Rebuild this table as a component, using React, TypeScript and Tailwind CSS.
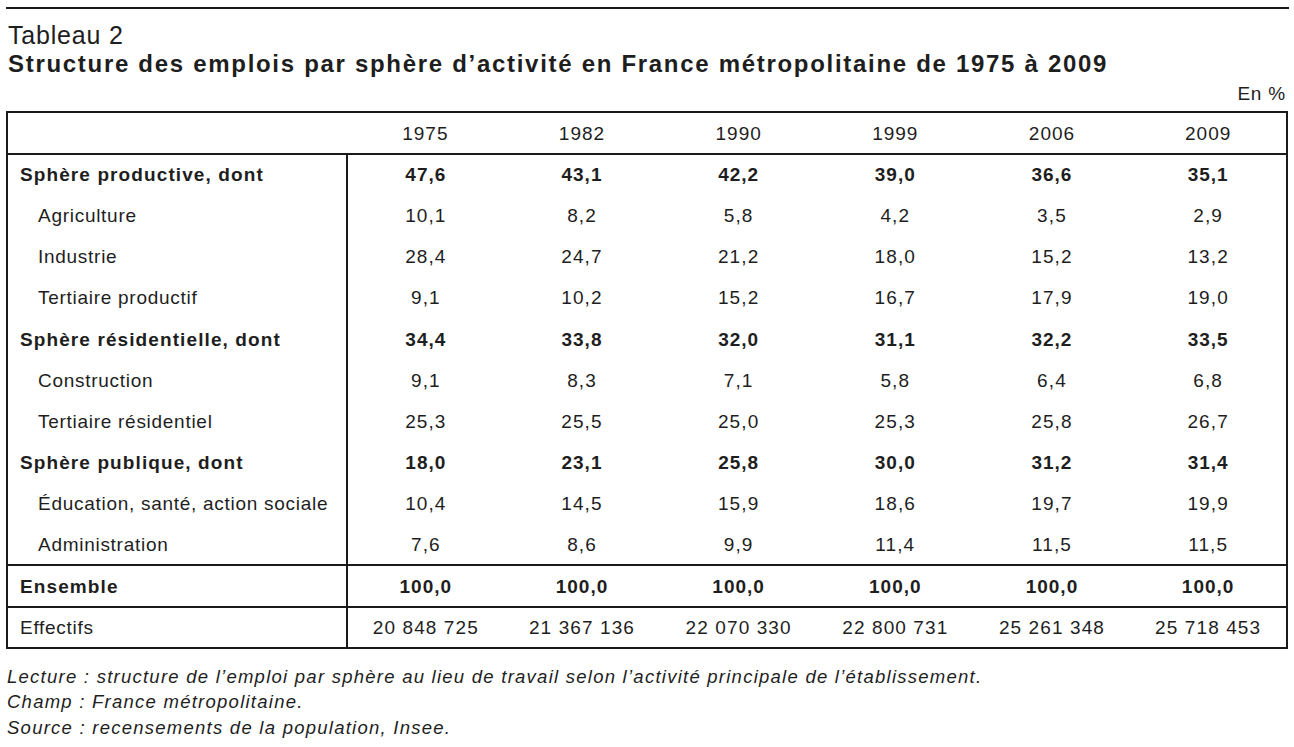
const years = ['1975', '1982', '1990', '1999', '2006', '2009'];

type Row = { label: string; values: string[]; kind: 'bold' | 'sub' | 'total' | 'plain' };

const rows: Row[] = [
  { label: 'Sphère productive, dont', values: ['47,6', '43,1', '42,2', '39,0', '36,6', '35,1'], kind: 'bold' },
  { label: 'Agriculture', values: ['10,1', '8,2', '5,8', '4,2', '3,5', '2,9'], kind: 'sub' },
  { label: 'Industrie', values: ['28,4', '24,7', '21,2', '18,0', '15,2', '13,2'], kind: 'sub' },
  { label: 'Tertiaire productif', values: ['9,1', '10,2', '15,2', '16,7', '17,9', '19,0'], kind: 'sub' },
  { label: 'Sphère résidentielle, dont', values: ['34,4', '33,8', '32,0', '31,1', '32,2', '33,5'], kind: 'bold' },
  { label: 'Construction', values: ['9,1', '8,3', '7,1', '5,8', '6,4', '6,8'], kind: 'sub' },
  { label: 'Tertiaire résidentiel', values: ['25,3', '25,5', '25,0', '25,3', '25,8', '26,7'], kind: 'sub' },
  { label: 'Sphère publique, dont', values: ['18,0', '23,1', '25,8', '30,0', '31,2', '31,4'], kind: 'bold' },
  { label: 'Éducation, santé, action sociale', values: ['10,4', '14,5', '15,9', '18,6', '19,7', '19,9'], kind: 'sub' },
  { label: 'Administration', values: ['7,6', '8,6', '9,9', '11,4', '11,5', '11,5'], kind: 'sub' },
  { label: 'Ensemble', values: ['100,0', '100,0', '100,0', '100,0', '100,0', '100,0'], kind: 'total' },
  { label: 'Effectifs', values: ['20 848 725', '21 367 136', '22 070 330', '22 800 731', '25 261 348', '25 718 453'], kind: 'plain' },
];

export default function App() {
  return (
    <div
      className="w-[1294px] h-[747px] bg-white text-[#1e1e1e] px-[6px] pt-[7px]"
      style={{ fontFamily: '"Liberation Sans", Arial, sans-serif' }}
    >
      <div className="w-[1283px] border-t-2 border-[#1a1a1a]" />
      <div className="pl-[2px] pt-[12px] text-[25px] leading-[28px] tracking-[0.8px]">Tableau 2</div>
      <div className="pl-[2px] text-[24px] leading-[30px] font-bold tracking-[1.7px]">
        Structure des emplois par sphère d’activité en France métropolitaine de 1975 à 2009
      </div>
      <div className="w-[1281px] text-right text-[19px] leading-[22px] pt-[4px] pb-[6px] pr-[1px] tracking-[0.8px]">
        En %
      </div>
      <table className="w-[1282px] border-collapse border-2 border-[#1a1a1a] text-[19px] table-fixed">
        <colgroup>
          <col className="w-[340px]" />
          {years.map((y) => (
            <col key={y} />
          ))}
        </colgroup>
        <thead>
          <tr className="h-[41.5px] border-b-2 border-[#1a1a1a]">
            <th className="font-normal" />
            {years.map((y) => (
              <th key={y} className="font-normal text-center pt-[3px] tracking-[1px]">
                {y}
              </th>
            ))}
          </tr>
        </thead>
        <tbody>
          {rows.map((r) => {
            const bold = r.kind === 'bold' || r.kind === 'total';
            const framed = r.kind === 'total' || r.kind === 'plain';
            return (
              <tr key={r.label} className={`h-[41.2px] ${framed ? 'border-t-2 border-[#1a1a1a]' : ''}`}>
                <td
                  className={`border-r-2 border-[#1a1a1a] pt-[2px] ${r.kind === 'sub' ? 'pl-[30px]' : 'pl-[12px]'} ${
                    bold ? 'font-bold tracking-[1.1px]' : 'tracking-[0.72px]'
                  }`}
                >
                  {r.label}
                </td>
                {r.values.map((v, i) => (
                  <td
                    key={i}
                    className={`text-center pt-[2px] ${bold ? 'font-bold tracking-[1px]' : 'tracking-[1.1px]'}`}
                  >
                    {v}
                  </td>
                ))}
              </tr>
            );
          })}
        </tbody>
      </table>
      <div className="pt-[15px] pl-[1px] italic text-[18.5px] leading-[25.5px] tracking-[1.25px]">
        <div>Lecture : structure de l’emploi par sphère au lieu de travail selon l’activité principale de l’établissement.</div>
        <div>Champ : France métropolitaine.</div>
        <div>Source : recensements de la population, Insee.</div>
      </div>
    </div>
  );
}
